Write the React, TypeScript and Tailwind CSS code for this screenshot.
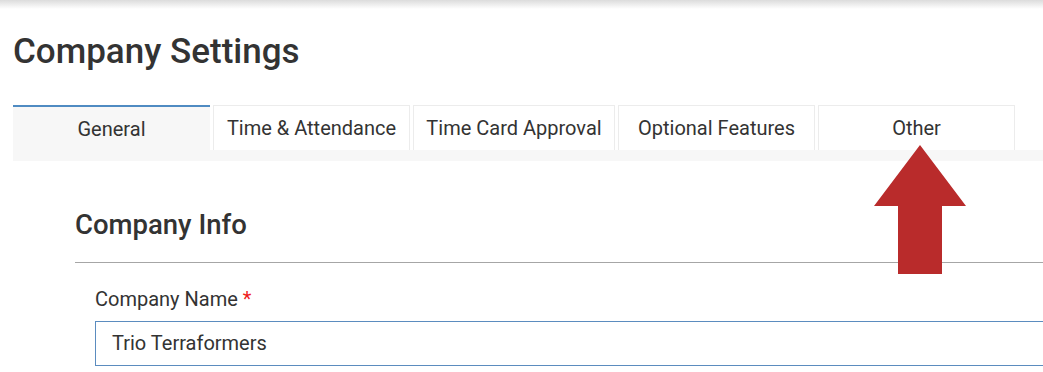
const tabs = [
  { label: 'General', width: 'w-[197px]' },
  { label: 'Time & Attendance', width: 'w-[197px]' },
  { label: 'Time Card Approval', width: 'w-[202px]' },
  { label: 'Optional Features', width: 'w-[197px]' },
  { label: 'Other', width: 'w-[197px]' },
];

const UpArrow = () => (
  <svg
    className="absolute left-[874px] top-[145px]"
    width="92"
    height="129"
    viewBox="0 0 92 129"
  >
    <polygon points="46,0 92,61 68,61 68,129 24,129 24,61 0,61" fill="#b92b2b" />
  </svg>
);

export default function App() {
  const active = 0;

  return (
    <div className="relative w-full h-[372px] overflow-hidden bg-white font-['Roboto',sans-serif] text-[#333]">
      {/* header shadow */}
      <div className="h-[9px] bg-gradient-to-b from-[#dcdcdc] to-white" />

      <div className="pl-[13px]">
        <h1 className="mt-[21px] text-[35px] leading-[43px] font-medium">Company Settings</h1>

        {/* Tabs */}
        <div className="mt-[32px] flex gap-[3px]">
          {tabs.map((tab, i) =>
            i === active ? (
              <div
                key={tab.label}
                className={`${tab.width} h-[45px] flex items-center justify-center border-t-2 border-[#4f8bc2] bg-[#f7f7f7] text-[20px] leading-[24px]`}
              >
                {tab.label}
              </div>
            ) : (
              <div
                key={tab.label}
                className={`${tab.width} h-[45px] flex items-center justify-center border border-b-0 border-[#ececec] bg-white text-[20px] leading-[24px]`}
              >
                {tab.label}
              </div>
            )
          )}
        </div>
        <div className="h-[11px] bg-[#f7f7f7]" />

        {/* Company Info */}
        <div className="pl-[62px]">
          <div className="mt-[47px] pb-[20px] border-b border-[#a6a6a6]">
            <h2 className="text-[27.5px] leading-[34px] font-medium">Company Info</h2>
          </div>

          <div className="pl-[20px] mt-[24px]">
            <label className="block text-[20px] leading-[24px]">
              Company Name <span className="text-[#ee1c1c]">*</span>
            </label>
            <div className="mt-[10px] w-[1000px] h-[45px] flex items-center pl-[16px] pb-[2px] border border-[#5b8cbf] text-[20px] leading-[24px]">
              Trio Terraformers
            </div>
          </div>
        </div>
      </div>

      <UpArrow />
    </div>
  );
}
